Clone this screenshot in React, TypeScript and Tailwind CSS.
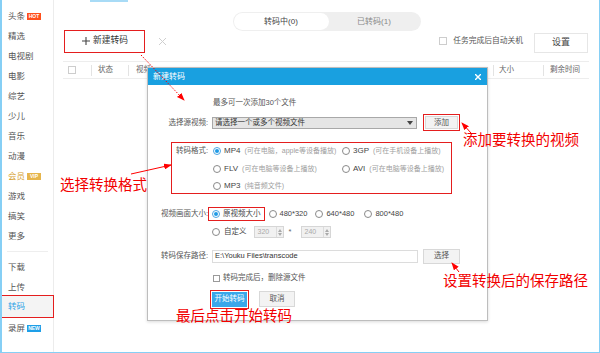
import React from "react";

const navTop = [
  { label: "头条", badge: "HOT" },
  { label: "精选" },
  { label: "电视剧" },
  { label: "电影" },
  { label: "综艺" },
  { label: "少儿" },
  { label: "音乐" },
  { label: "动漫" },
  { label: "会员", badge: "VIP" },
  { label: "游戏" },
  { label: "搞笑" },
  { label: "更多" },
];

function Badge({ kind }: { kind: string }) {
  const bg =
    kind === "HOT" ? "bg-[#ff4f1c]" : kind === "VIP" ? "bg-[#e6b54c]" : "bg-[#1e9fe8]";
  return (
    <span
      className={`ml-[2px] flex h-[7px] w-[14px] items-center justify-center text-[5px] leading-none font-bold text-white ${bg}`}
    >
      {kind}
    </span>
  );
}

function Radio({ checked = false }: { checked?: boolean }) {
  return (
    <span
      className={`flex h-[8px] w-[8px] shrink-0 items-center justify-center rounded-full border bg-white ${
        checked ? "border-[#4ea6e2]" : "border-[#8a8a8a]"
      }`}
    >
      {checked && <span className="h-[4px] w-[4px] rounded-full bg-[#1f9be6]" />}
    </span>
  );
}

function Spin({ value }: { value: string }) {
  return (
    <div className="flex h-[12px] w-[30px] items-center border border-[#d6d6d6] bg-[#f1f1f1]">
      <span className="flex-1 pl-[3px] text-[7px] text-[#aaa]">{value}</span>
      <div className="flex h-full w-[7px] flex-col items-center justify-center gap-[1px] border-l border-[#dcdcdc]">
        <svg width="4" height="3" viewBox="0 0 4 3">
          <path d="M0 3 L2 0 L4 3 Z" fill="#aaa" />
        </svg>
        <svg width="4" height="3" viewBox="0 0 4 3">
          <path d="M0 0 L2 3 L4 0 Z" fill="#aaa" />
        </svg>
      </div>
    </div>
  );
}

function Sep() {
  return <span className="h-[11px] w-px bg-[#e3e3e3]" />;
}

function FormatOption({ name, hint, checked }: { name: string; hint: string; checked?: boolean }) {
  return (
    <div className="flex items-center">
      <Radio checked={checked} />
      <span className="ml-[3px] text-[8px] text-[#444]">{name}</span>
      <span className="ml-[4px] text-[7px] text-[#a0a0a0]">{hint}</span>
    </div>
  );
}

export default function App() {
  return (
    <div className="relative h-[353px] w-[600px] overflow-hidden border-r border-b border-l-2 border-[#86cff5] bg-white font-['Liberation_Sans','Noto_Sans_CJK_SC',sans-serif]">
      <div className="flex h-full">
        {/* sidebar */}
        <div className="flex w-[52px] shrink-0 flex-col border-r border-[#ececec] pt-[6px]">
          {navTop.map((item) => (
            <div key={item.label} className="flex h-[20px] items-center pl-[6px]">
              <span
                className={`text-[8.5px] ${item.badge === "VIP" ? "text-[#d6a02c]" : "text-[#555]"}`}
              >
                {item.label}
              </span>
              {item.badge && <Badge kind={item.badge} />}
            </div>
          ))}
          <div className="mx-[5px] mt-[5px] h-px bg-[#eeeeee]" />
          <div className="mt-[5px] flex h-[20px] items-center pl-[6px] text-[8.5px] text-[#555]">下载</div>
          <div className="flex h-[20px] items-center pl-[6px] text-[8.5px] text-[#555]">上传</div>
          <div className="-mt-[2px] -ml-[2px] flex h-[23px] w-[54px] items-center border border-[#e41e1e] bg-[#f4f4f4] pl-[7px] text-[8.5px] text-[#2ea3e6]">
            转码
          </div>
          <div className="flex h-[20px] items-center pl-[6px]">
            <span className="text-[8.5px] text-[#555]">录屏</span>
            <Badge kind="NEW" />
          </div>
        </div>

        {/* main */}
        <div className="flex flex-1 flex-col">
          <div className="flex h-[2px]">
            <div className="ml-[36px] w-[38px] bg-[#a8dbf6]" />
          </div>
          <div className="mt-[10px] flex justify-center">
            <div className="flex h-[19px] w-[188px] rounded-full bg-[#efefef] p-[1px]">
              <div className="flex w-[95px] items-center justify-center rounded-full bg-white text-[8px] text-[#444]">
                转码中(0)
              </div>
              <div className="flex flex-1 items-center justify-center text-[8px] text-[#888]">已转码(1)</div>
            </div>
          </div>

          <div className="-mt-[2px] flex h-[24px] items-center">
            <div className="ml-[10px] flex h-[23px] w-[81px] items-center border border-[#e41e1e] pl-[17px]">
              <svg width="8" height="8" viewBox="0 0 8 8">
                <path d="M4 0 V8 M0 4 H8" stroke="#444" strokeWidth="1.1" />
              </svg>
              <span className="ml-[3px] text-[8.75px] text-[#333]">新建转码</span>
            </div>
            <svg className="ml-[14px]" width="7" height="7" viewBox="0 0 7 7">
              <path d="M0 0 L7 7 M7 0 L0 7" stroke="#cfcfcf" strokeWidth="1" />
            </svg>
            <div className="ml-auto h-[8px] w-[8px] border border-[#cdcdcd]" />
            <span className="ml-[6px] text-[7.75px] text-[#555]">任务完成后自动关机</span>
            <div className="mt-[3px] mr-[11px] ml-[11px] flex h-[20px] w-[54px] items-center justify-center border border-[#e6e6e6] text-[9px] text-[#444]">
              设置
            </div>
          </div>

          <div className="mt-[8px] mr-[10px] ml-[9px] flex h-[18px] items-center border-y border-[#ededed] text-[7.5px] text-[#666]">
            <div className="ml-[5px] h-[8px] w-[8px] border border-[#cdcdcd]" />
            <span className="w-[15px]" />
            <Sep />
            <span className="ml-[6px] w-[30px]">状态</span>
            <Sep />
            <span className="ml-[7px]">视频</span>
            <span className="ml-auto" />
            <Sep />
            <span className="w-[49px] pl-[5px]">大小</span>
            <Sep />
            <span className="w-[45px] pl-[6px]">剩余时间</span>
          </div>
        </div>
      </div>

      {/* dialog */}
      <div className="absolute top-[67px] left-[145px] flex h-[254px] w-[341px] flex-col border border-[#bdbdbd] bg-white shadow-[0_1px_3px_rgba(0,0,0,0.15)]">
        <div className="flex h-[17px] items-center bg-[#19a0e0] px-[5px]">
          <span className="text-[8px] text-white">新建转码</span>
          <svg className="ml-auto mr-[1px]" width="6" height="6" viewBox="0 0 6 6">
            <path d="M0 0 L6 6 M6 0 L0 6" stroke="#fff" strokeWidth="1.4" />
          </svg>
        </div>

        <div className="mt-[13px] flex h-[10px] items-center pl-[65px] text-[7.5px] text-[#555]">
          最多可一次添加30个文件
        </div>

        <div className="mt-[6px] flex h-[17px] items-center">
          <span className="w-[60px] text-right text-[7.5px] text-[#555]">选择源视频:</span>
          <div className="ml-[4px] flex h-[12px] w-[205px] items-center border border-[#a8a8a8] bg-[#e5e5e5] pl-[2px]">
            <span className="text-[7.5px] text-[#333]">请选择一个或多个视频文件</span>
            <svg className="ml-auto mr-[3px]" width="6" height="4" viewBox="0 0 6 4">
              <path d="M0 0 L6 0 L3 4 Z" fill="#444" />
            </svg>
          </div>
          <div className="ml-[8px] flex h-[13px] w-[33px] items-center justify-center border border-[#d8d8d8] bg-[#f3f3f3] text-[7.5px] text-[#555] outline outline-1 outline-offset-1 outline-[#e41e1e]">
            添加
          </div>
        </div>

        <div className="mt-[11px] ml-[23px] flex h-[52px] w-[281px] flex-col border border-[#e41e1e] pt-px">
          <div className="flex h-[14px] items-center">
            <span className="w-[36px] text-right text-[7.5px] text-[#555]">转码格式:</span>
            <div className="ml-[5px] grid grid-cols-[129px_auto]">
              <FormatOption name="MP4" hint="(可在电脑，apple等设备播放)" checked />
              <FormatOption name="3GP" hint="(可在手机设备上播放)" />
            </div>
          </div>
          <div className="mt-[4px] flex h-[14px] items-center">
            <span className="w-[36px]" />
            <div className="ml-[5px] grid grid-cols-[129px_auto]">
              <FormatOption name="FLV" hint="(可在电脑等设备上播放)" />
              <FormatOption name="AVI" hint="(可在电脑等设备上播放)" />
            </div>
          </div>
          <div className="mt-[3px] flex h-[14px] items-center">
            <span className="w-[36px]" />
            <div className="ml-[5px]">
              <FormatOption name="MP3" hint="(纯音频文件)" />
            </div>
          </div>
        </div>

        <div className="mt-[13px] flex h-[14px] items-center text-[7.5px] text-[#444]">
          <span className="w-[60px] text-right text-[#555]">视频画面大小:</span>
          <div className="flex h-[14px] items-center border border-[#e41e1e] px-[3px]">
            <Radio checked />
            <span className="ml-[3px]">原视频大小</span>
          </div>
          <span className="ml-[4px]">
            <Radio />
          </span>
          <span className="ml-[3px]">480*320</span>
          <span className="ml-[8px]">
            <Radio />
          </span>
          <span className="ml-[3px]">640*480</span>
          <span className="ml-[10px]">
            <Radio />
          </span>
          <span className="ml-[3px]">800*480</span>
        </div>

        <div className="mt-[4px] flex h-[14px] items-center text-[7.5px] text-[#444]">
          <span className="w-[60px]" />
          <span className="ml-[4px]">
            <Radio />
          </span>
          <span className="ml-[4px]">自定义</span>
          <span className="ml-[7px]">
            <Spin value="320" />
          </span>
          <span className="ml-[5px] w-[12px] text-[#666]">*</span>
          <Spin value="240" />
        </div>

        <div className="mt-[9px] flex h-[16px] items-center">
          <span className="w-[60px] text-right text-[7.5px] text-[#555]">转码保存路径:</span>
          <div className="ml-[4px] flex h-[13px] w-[206px] items-center border border-[#dcdcdc] pl-[2px] text-[7.5px] text-[#333]">
            E:\Youku Files\transcode
          </div>
          <div className="ml-[5px] flex h-[15px] w-[37px] items-center justify-center border border-[#d8d8d8] bg-[#f3f3f3] text-[7.5px] text-[#555]">
            选择
          </div>
        </div>

        <div className="mt-[8px] flex h-[12px] items-center pl-[65px]">
          <div className="h-[7px] w-[7px] border border-[#9a9a9a]" />
          <span className="ml-[3px] text-[7.5px] text-[#555]">转码完成后，删除源文件</span>
        </div>

        <div className="mt-[7px] flex h-[16px] items-center pl-[64px]">
          <div className="flex h-[15px] w-[35px] items-center justify-center bg-[#39a7ea] text-[7.5px] text-white outline outline-1 outline-offset-1 outline-[#e41e1e]">
            开始转码
          </div>
          <div className="ml-[12px] flex h-[16px] w-[36px] items-center justify-center border border-[#d8d8d8] bg-[#f3f3f3] text-[7.5px] text-[#555]">
            取消
          </div>
        </div>
      </div>

      {/* annotations */}
      <span className="absolute top-[132px] left-[461px] text-[14.5px] leading-[16px] text-[#f20000]">
        添加要转换的视频
      </span>
      <span className="absolute top-[177px] left-[58px] text-[14.5px] leading-[16px] text-[#f20000]">
        选择转换格式
      </span>
      <span className="absolute top-[273px] left-[441px] text-[14.5px] leading-[16px] text-[#f20000]">
        设置转换后的保存路径
      </span>
      <span className="absolute top-[308px] left-[174px] text-[14.5px] leading-[16px] text-[#f20000]">
        最后点击开始转码
      </span>

      <svg className="pointer-events-none absolute top-0 -left-[2px]" width="600" height="353">
        <defs>
          <marker
            id="ah"
            markerWidth="8"
            markerHeight="6"
            refX="7"
            refY="3"
            orient="auto"
            markerUnits="userSpaceOnUse"
          >
            <path d="M0 0 L8 3 L0 6 Z" fill="#f00" />
          </marker>
        </defs>
        <line x1="141" y1="55" x2="184" y2="100" stroke="#f00" strokeWidth="1" strokeDasharray="1.5 1.5" markerEnd="url(#ah)" />
        <line x1="131" y1="174" x2="171" y2="165" stroke="#f00" strokeWidth="1" markerEnd="url(#ah)" />
        <line x1="471" y1="133" x2="462" y2="123" stroke="#f00" strokeWidth="1" markerEnd="url(#ah)" />
        <line x1="459" y1="272" x2="452" y2="263" stroke="#f00" strokeWidth="1" markerEnd="url(#ah)" />
      </svg>
    </div>
  );
}
